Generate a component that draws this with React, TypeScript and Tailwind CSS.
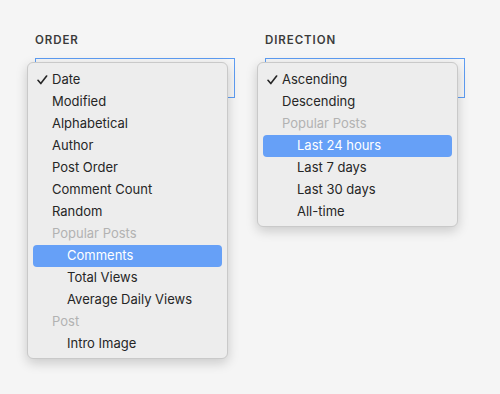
import React from "react";

type Item = { label: string; kind?: "header" | "sub" | "item"; checked?: boolean; active?: boolean };

const orderItems: Item[] = [
  { label: "Date", checked: true },
  { label: "Modified" },
  { label: "Alphabetical" },
  { label: "Author" },
  { label: "Post Order" },
  { label: "Comment Count" },
  { label: "Random" },
  { label: "Popular Posts", kind: "header" },
  { label: "Comments", kind: "sub", active: true },
  { label: "Total Views", kind: "sub" },
  { label: "Average Daily Views", kind: "sub" },
  { label: "Post", kind: "header" },
  { label: "Intro Image", kind: "sub" },
];

const dirItems: Item[] = [
  { label: "Ascending", checked: true },
  { label: "Descending" },
  { label: "Popular Posts", kind: "header" },
  { label: "Last 24 hours", kind: "sub", active: true },
  { label: "Last 7 days", kind: "sub" },
  { label: "Last 30 days", kind: "sub" },
  { label: "All-time", kind: "sub" },
];

function Check() {
  return (
    <svg
      className="absolute left-[4px] top-[6px]"
      width="11"
      height="10"
      viewBox="0 0 11 10"
      fill="none"
    >
      <path d="M1 5.3 L3.8 8.6 L9.6 1" stroke="#262626" strokeWidth="1.6" strokeLinecap="round" strokeLinejoin="round" />
    </svg>
  );
}

function Menu({ items }: { items: Item[] }) {
  return (
    <div className="absolute left-[-9px] top-[3px] w-[201px] rounded-[6px] border border-[#c9c9c9] bg-[#ededed] pt-[6px] pb-[3px] shadow-[0_4px_12px_rgba(0,0,0,0.18)]">
      {items.map((it, i) => (
        <div
          key={i}
          className={
            "relative mx-[5px] flex h-[22px] items-center rounded-[4px] text-[13px] " +
            (it.active ? "bg-[#66a0f7] text-white " : "") +
            (it.kind === "header" ? "text-[#b2b2b2] " : it.active ? "" : "text-[#262626] ")
          }
        >
          {it.checked && <Check />}
          <span className={it.kind === "sub" ? "pl-[34px]" : "pl-[19px]"}>{it.label}</span>
        </div>
      ))}
    </div>
  );
}

function Field({ label, items }: { label: string; items: Item[] }) {
  return (
    <div className="flex w-[200px] flex-col">
      <div className="h-[16px] text-[11.5px] font-semibold uppercase leading-[16px] tracking-[0.08em] text-[#3b3b3b]">
        {label}
      </div>
      <div className="relative mt-[10px] h-[40px] border border-[#5d9cf2]">
        <Menu items={items} />
      </div>
    </div>
  );
}

export default function App() {
  return (
    <div
      className="h-[394px] w-[500px] bg-[#f5f5f5] pl-[35px] pt-[32px]"
      style={{ fontFamily: "Inter, 'Noto Sans', sans-serif" }}
    >
      <div className="flex gap-[30px]">
        <Field label="Order" items={orderItems} />
        <Field label="Direction" items={dirItems} />
      </div>
    </div>
  );
}
